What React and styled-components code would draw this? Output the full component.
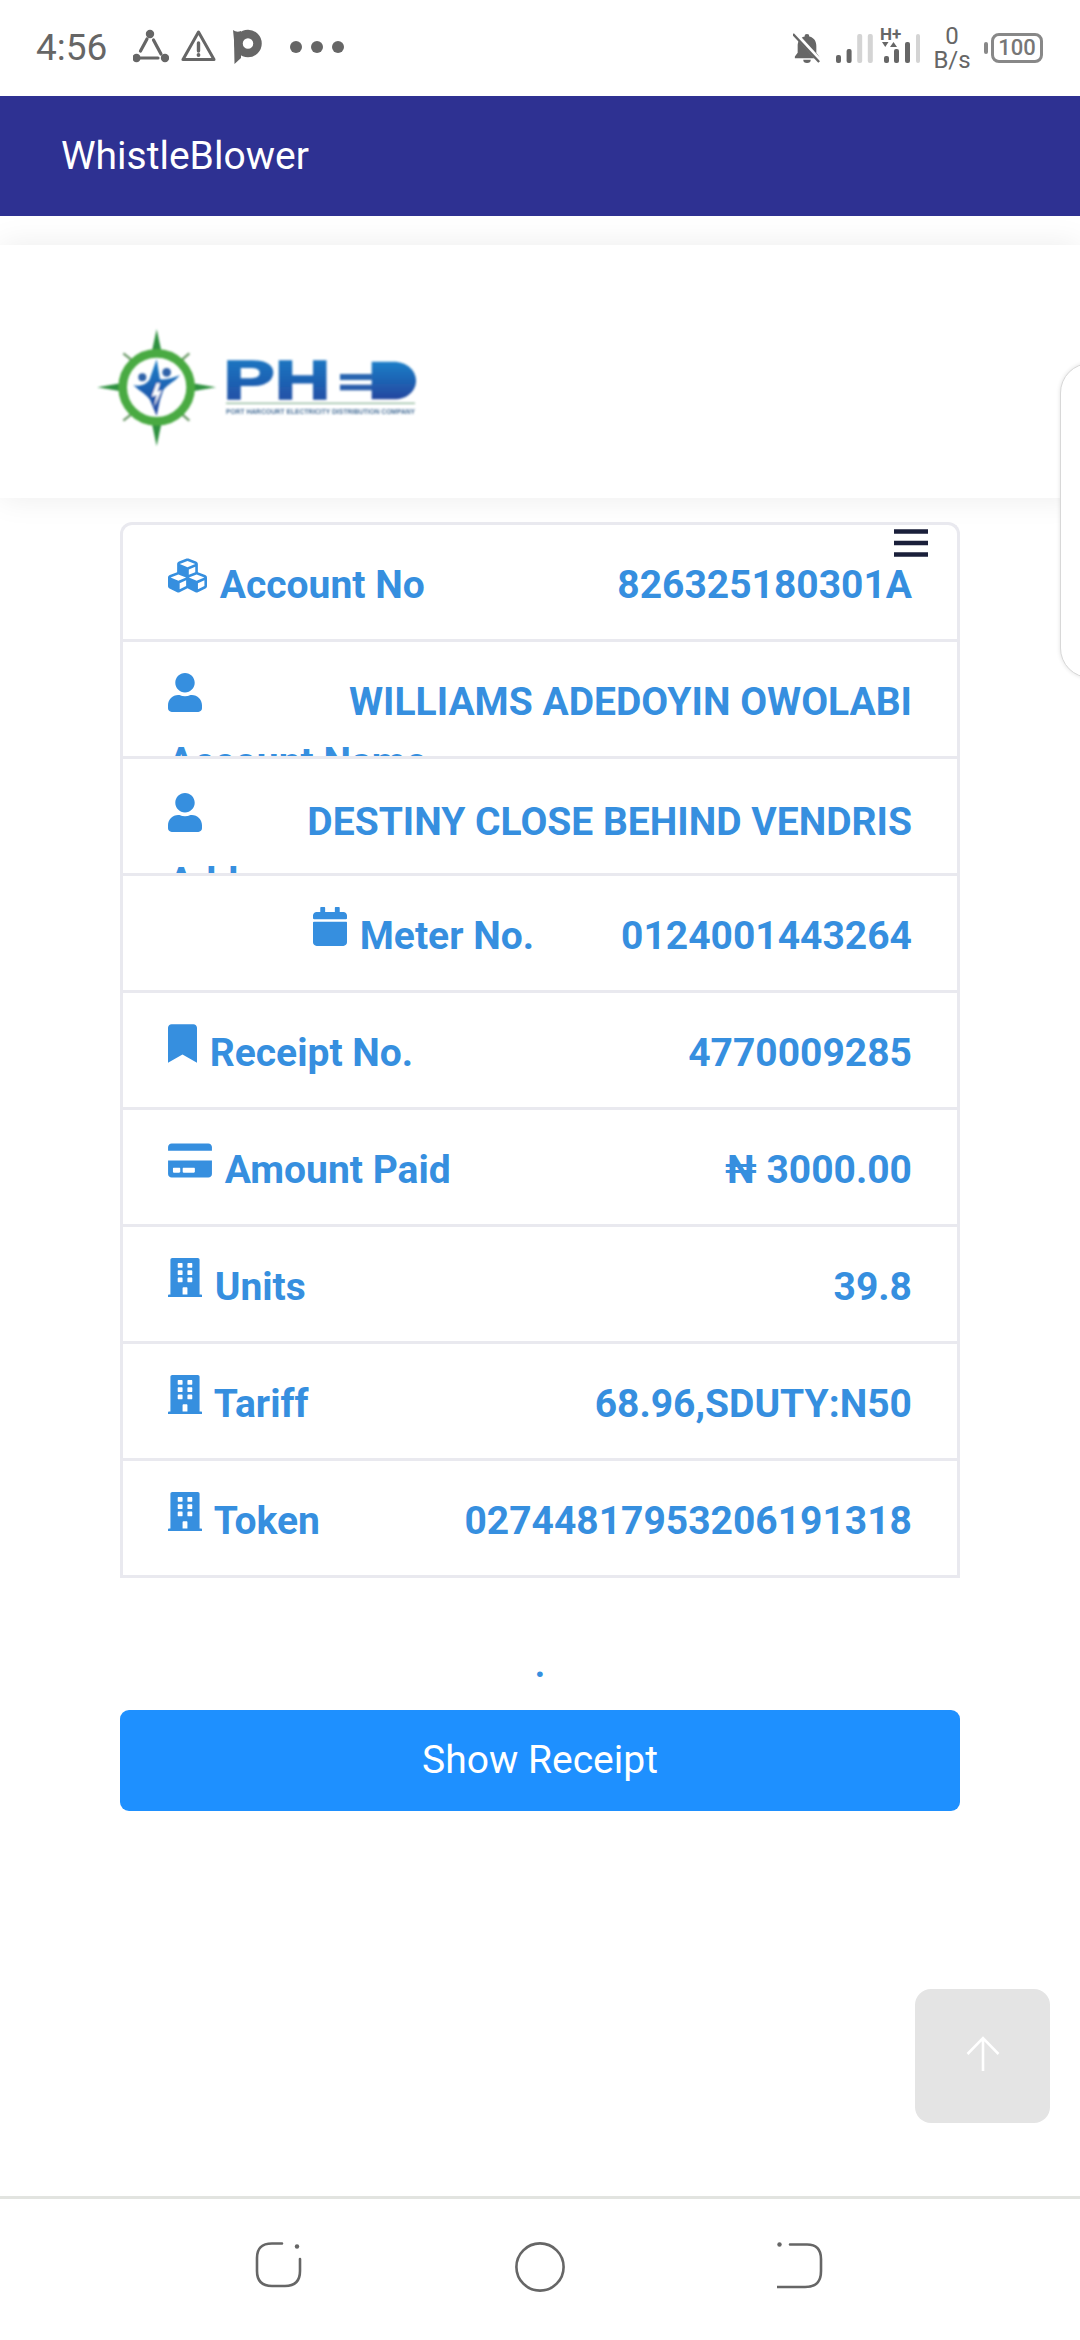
import React from 'react';
import styled, { createGlobalStyle } from 'styled-components';
import { FaCubes, FaUser, FaCalendar, FaBookmark, FaCreditCard, FaBuilding } from 'react-icons/fa';

const GlobalStyle = createGlobalStyle`
  html, body { margin: 0; padding: 0; background: #fff; }
  body { font-family: Roboto, "Liberation Sans", sans-serif; }
`;

// iconWidth follows each icon's own viewBox at 39px height
const rows = [
  { icon: FaCubes, iconWidth: 39, label: 'Account No', value: '826325180301A' },
  { icon: FaUser, iconWidth: 34, label: 'Account Name', value: 'WILLIAMS ADEDOYIN OWOLABI' },
  { icon: FaUser, iconWidth: 34, label: 'Address', value: 'DESTINY CLOSE BEHIND VENDRIS', top: 33 },
  { icon: FaCalendar, iconWidth: 34, label: 'Meter No.', value: '0124001443264', indent: 145 },
  { icon: FaBookmark, iconWidth: 29, label: 'Receipt No.', value: '4770009285' },
  { icon: FaCreditCard, iconWidth: 44, label: 'Amount Paid', value: '₦ 3000.00' },
  { icon: FaBuilding, iconWidth: 34, label: 'Units', value: '39.8' },
  { icon: FaBuilding, iconWidth: 34, label: 'Tariff', value: '68.96,SDUTY:N50' },
  { icon: FaBuilding, iconWidth: 34, label: 'Token', value: '02744817953206191318' },
];

function StatusLeft() {
  return (
    <LeftIcons>
      <svg width="36" height="36" viewBox="0 0 36 36" fill="#666" stroke="#666" strokeWidth="3.2" strokeLinecap="round">
        <circle cx="17" cy="5" r="2.6" />
        <circle cx="3.5" cy="29" r="2.6" />
        <circle cx="32" cy="29" r="2.6" />
        <path d="M14 10 L7.5 22 M20.5 11 L28 25 M8 29 H25" fill="none" />
      </svg>
      <svg width="36" height="36" viewBox="0 0 36 36">
        <path d="M17.5 3 L2 30.5 H33 Z" fill="none" stroke="#666" strokeWidth="3" strokeLinejoin="round" />
        <path d="M17.5 14 V22" stroke="#666" strokeWidth="3.4" strokeLinecap="round" />
        <circle cx="17.5" cy="26" r="1.9" fill="#666" />
      </svg>
      <PMark width="29" height="36" viewBox="0 0 29 36">
        <path d="M0 1 C3 3 5 3 8 2 L8 29 L1.5 35 L1 11 Z" fill="#666" />
        <circle cx="15" cy="14.5" r="9.5" fill="none" stroke="#666" strokeWidth="8.5" />
      </PMark>
      <Dots>
        <span />
        <span />
        <span />
      </Dots>
    </LeftIcons>
  );
}

function Bars({ heights }) {
  return (
    <BarsSvg width="40" height="32" viewBox="0 0 40 32">
      {heights.map((b, i) => (
        <rect key={i} x={i * 10.6} y={31 - b.h} width="5" height={b.h} rx="2" fill={b.on ? '#666' : '#d4d4d4'} />
      ))}
    </BarsSvg>
  );
}

function StatusRight() {
  return (
    <RightIcons>
      <svg width="28" height="32" viewBox="0 0 30 32">
        <path d="M15 1 a2.5 2.5 0 0 1 2.5 2.6 C23 5 25 9 25 14 V21 L28 25 V27 H2 V25 L5 21 V14 C5 9 7 5 12.5 3.6 A2.5 2.5 0 0 1 15 1 Z" fill="#666" />
        <path d="M11 28.5 H19 A4 3.5 0 0 1 11 28.5 Z" fill="#666" />
        <path d="M1.5 0 L30 31" stroke="#fff" strokeWidth="5" />
        <path d="M0 1 L28 31" stroke="#666" strokeWidth="2.6" />
      </svg>
      <Bars heights={[{ h: 8, on: true }, { h: 14, on: true }, { h: 29 }, { h: 29 }]} />
      <HPlus>
        <svg width="40" height="36" viewBox="0 0 40 36">
          <text x="0" y="13" fontFamily="Roboto, sans-serif" fontWeight="700" fontSize="17" fill="#666">H+</text>
          <path d="M2 15 H8.5 L5.25 20 Z M10 20 H17 L13.5 15 Z" fill="#666" />
          <rect x="4" y="29" width="5" height="7" rx="2" fill="#666" />
          <rect x="14" y="22" width="5" height="14" rx="2" fill="#666" />
          <rect x="25" y="15" width="5" height="21" rx="2" fill="#666" />
          <rect x="36" y="7" width="4" height="29" rx="2" fill="#d4d4d4" />
        </svg>
      </HPlus>
      <Speed>
        <span>0</span>
        <span>B/s</span>
      </Speed>
      <Battery>100</Battery>
    </RightIcons>
  );
}

function PhedLogo() {
  return (
    <LogoSvg viewBox="0 0 1200 540">
      <defs>
        <linearGradient id="phed" x1="0" y1="0" x2="0" y2="1">
          <stop offset="0" stopColor="#1c7fc8" />
          <stop offset="1" stopColor="#22479f" />
        </linearGradient>
        <filter id="soft">
          <feGaussianBlur stdDeviation="2.6" />
        </filter>
      </defs>
      <g filter="url(#soft)">
        <path d="M190 160 L215 180 M388 160 L365 180 M190 362 L215 342 M388 362 L365 342" stroke="#6f9c6c" strokeWidth="7" />
        <path d="M290 88 L304 152 H276 Z M290 438 L304 372 H276 Z M112 262 L182 250 V274 Z M468 262 L398 250 V274 Z" fill="#2f9140" />
        <circle cx="290" cy="262" r="102" fill="none" stroke="#4aaa42" strokeWidth="26" />
        <circle cx="247" cy="232" r="12" fill="#2f62a8" />
        <circle cx="320" cy="217" r="13" fill="#2f62a8" />
        <path d="M220 255 C245 262 262 248 268 240 L290 178 L300 238 C320 240 345 232 360 225 C345 245 320 255 310 270 L300 300 L290 348 L270 300 C262 285 240 275 220 255 Z" fill="url(#phed)" />
        <path d="M290 250 L275 290 L290 285 L282 322 L305 270 L292 275 L300 250 Z" fill="#fff" />
        <text x="490" y="298" fontFamily="'Liberation Sans', sans-serif" fontWeight="700" fontSize="165" textLength="322" lengthAdjust="spacingAndGlyphs" fill="url(#phed)" stroke="url(#phed)" strokeWidth="5">PH</text>
        <rect x="840" y="222" width="100" height="18" fill="#2a66b0" />
        <rect x="840" y="254" width="100" height="17" fill="#2a5fab" />
        <path d="M935 185 H1000 C1045 185 1068 215 1068 242 C1068 270 1045 298 1000 298 H935 Z" fill="url(#phed)" />
        <rect x="498" y="308" width="567" height="4" fill="#8fb79a" />
        <text x="498" y="342" fontFamily="'Liberation Sans', sans-serif" fontWeight="700" fontSize="20" textLength="567" lengthAdjust="spacingAndGlyphs" fill="#4a7199">PORT HARCOURT ELECTRICITY DISTRIBUTION COMPANY</text>
      </g>
    </LogoSvg>
  );
}

export default function App() {
  return (
    <Page>
      <GlobalStyle />
      <StatusBar>
        <Time>4:56</Time>
        <StatusLeft />
        <StatusRight />
      </StatusBar>
      <AppBar>WhistleBlower</AppBar>
      <Header>
        <PhedLogo />
      </Header>
      <Main>
        <Card>
          <Hamburger viewBox="0 0 34 28">
            <path d="M0 2.5 H34 M0 14 H34 M0 25.5 H34" stroke="#1a1f3a" strokeWidth="4.5" />
          </Hamburger>
          {rows.map(row => {
            const Icon = row.icon;
            return (
              <Row key={row.label} $top={row.top}>
                <Label $indent={row.indent} $iconWidth={row.iconWidth}>
                  <Icon /> <span>{row.label}</span>
                </Label>
                <Value>{row.value}</Value>
              </Row>
            );
          })}
        </Card>
        <Dot>.</Dot>
        <ShowButton>Show Receipt</ShowButton>
      </Main>
      <SidePanel />
      <ScrollTop>
        <svg width="34" height="36" viewBox="0 0 34 36">
          <path d="M17 35 V2 M1.5 18 L17 2 L32.5 18" fill="none" stroke="#fff" strokeWidth="2.6" />
        </svg>
      </ScrollTop>
      <NavBar>
        <svg width="48" height="46" viewBox="0 0 48 46" fill="none" stroke="#666" strokeWidth="2.6">
          <path d="M27 1.5 H17 C6 1.5 2 7 2 16 V29 C2 39 7 44 17 44 H30 C40 44 45 39 45 29 V17" strokeLinecap="round" />
          <circle cx="42" cy="4.5" r="2.2" fill="#666" stroke="none" />
        </svg>
        <svg width="50" height="50" viewBox="0 0 50 50">
          <circle cx="25" cy="25" r="23.6" fill="none" stroke="#666" strokeWidth="2.6" />
        </svg>
        <svg width="46" height="48" viewBox="0 0 46 48" fill="none" stroke="#666" strokeWidth="2.6">
          <path d="M13 2.5 H30 C40 2.5 44 8 44 17 V29 C44 40 39 45 28 45 H0.5" strokeLinecap="round" />
          <circle cx="2.5" cy="2.5" r="2.2" fill="#666" stroke="none" />
        </svg>
      </NavBar>
    </Page>
  );
}

const Page = styled.div`
  position: relative;
  width: 1080px;
  height: 2340px;
  display: flex;
  flex-direction: column;
  overflow: hidden;
  background: #fff;
`;

const StatusBar = styled.div`
  height: 96px;
  flex: none;
  display: flex;
  align-items: center;
  padding-left: 36px;
  color: #666;
  box-sizing: border-box;
`;

const Time = styled.div`
  font-size: 37px;
  font-weight: 400;
  width: 97px;
  line-height: 96px;
`;

const LeftIcons = styled.div`
  display: flex;
  align-items: center;
  gap: 12px;
  margin-top: -2px;
`;

const PMark = styled.svg`
  margin-left: 4px;
`;

const Dots = styled.div`
  display: flex;
  gap: 9px;
  margin-left: 16px;

  span {
    width: 12px;
    height: 12px;
    border-radius: 50%;
    background: #666;
  }
`;

const RightIcons = styled.div`
  display: flex;
  align-items: center;
  margin-left: auto;
  padding-right: 37px;
`;

const BarsSvg = styled.svg`
  margin-left: 15px;
`;

const HPlus = styled.div`
  margin-left: 4px;
  margin-top: -6px;
  height: 36px;
`;

const Speed = styled.div`
  display: flex;
  flex-direction: column;
  align-items: center;
  width: 40px;
  margin-left: 12px;
  font-size: 24px;
  line-height: 24px;
  color: #666;
`;

const Battery = styled.div`
  position: relative;
  width: 52px;
  height: 30px;
  margin-left: 19px;
  box-sizing: border-box;
  border: 3px solid #888;
  border-radius: 8px;
  font-size: 22px;
  font-weight: 500;
  line-height: 24px;
  text-align: center;
  color: #777;

  &::before {
    content: '';
    position: absolute;
    left: -10px;
    top: 6px;
    width: 4px;
    height: 12px;
    border-radius: 2px;
    background: #888;
  }
`;

const AppBar = styled.div`
  height: 120px;
  flex: none;
  background: #2e3192;
  color: #fff;
  font-size: 39px;
  line-height: 120px;
  padding-left: 61px;
`;

const Header = styled.div`
  height: 253px;
  flex: none;
  margin-top: 29px;
  padding: 55px 0 0 60px;
  box-sizing: border-box;
  background: #fff;
  box-shadow: 0 0 30px rgba(0, 0, 0, 0.08);
`;

const LogoSvg = styled.svg`
  display: block;
  width: 400px;
  height: 180px;
`;

const Main = styled.div`
  flex: 1;
  padding: 24px 120px 0;
`;

const Card = styled.div`
  position: relative;
  border: 3px solid #e9e9ef;
  border-bottom: 0;
  border-radius: 12px 12px 0 0;
`;

const Hamburger = styled.svg`
  position: absolute;
  top: 4px;
  right: 29px;
  width: 34px;
  height: 28px;
`;

const Row = styled.div`
  height: 117px;
  box-sizing: border-box;
  padding: ${p => p.$top || 30}px 45px 0 45px;
  display: flex;
  justify-content: space-between;
  overflow: hidden;
  border-bottom: 3px solid #e9e9ef;
  color: #368fdf;
  font-size: 39px;
  font-weight: 700;
  line-height: 60px;
`;

const Label = styled.div`
  min-width: 0;
  margin-left: ${p => p.$indent || 0}px;

  svg {
    width: ${p => p.$iconWidth}px;
    height: 39px;
    vertical-align: 3px;
    margin-right: 3px;
  }

  span {
    white-space: nowrap;
  }
`;

const Value = styled.div`
  flex: none;
  white-space: nowrap;
`;

const Dot = styled.div`
  height: 132px;
  text-align: center;
  color: #368fdf;
  font-size: 36px;
  font-weight: 700;
  line-height: 174px;
`;

const ShowButton = styled.div`
  height: 101px;
  border-radius: 9px;
  background: #1e90ff;
  color: #fff;
  font-size: 39px;
  line-height: 101px;
  text-align: center;
`;

const SidePanel = styled.div`
  position: absolute;
  left: 1060px;
  top: 363px;
  width: 40px;
  height: 315px;
  box-sizing: border-box;
  background: #fff;
  border: 1px solid #d8d8d8;
  border-radius: 30px 0 0 30px;
  box-shadow: 0 0 4px rgba(0, 0, 0, 0.12);
`;

const ScrollTop = styled.div`
  position: absolute;
  left: 915px;
  top: 1989px;
  width: 135px;
  height: 134px;
  padding-bottom: 4px;
  box-sizing: border-box;
  display: flex;
  align-items: center;
  justify-content: center;
  border-radius: 16px;
  background: #e4e4e4;
`;

const NavBar = styled.div`
  height: 144px;
  flex: none;
  box-sizing: border-box;
  border-top: 3px solid #e2e4e0;
  padding: 43px 0 0 255px;
  display: flex;
  align-items: flex-start;
  gap: 212px;
`;
